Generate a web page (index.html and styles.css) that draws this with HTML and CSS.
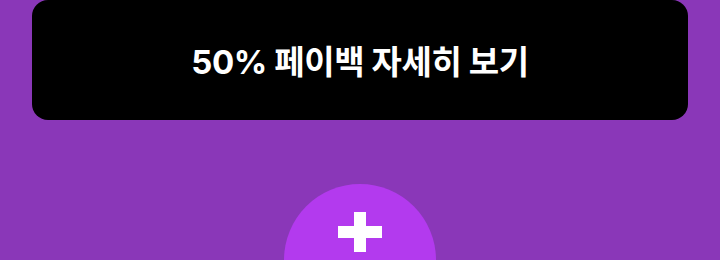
FILE: index.html
```html
<!DOCTYPE html>
<html lang="ko">
  <head>
    <meta charset="UTF-8" />
    <meta name="viewport" content="width=device-width, initial-scale=1.0" />
    <title>페이백</title>
    <link rel="stylesheet" href="styles.css">
  </head>
  <body>
    <button class="payback-btn">50% 페이백 자세히 보기</button>

    <div class="add-wrap">
      <button class="add-btn" aria-label="추가">
        <span class="plus"></span>
      </button>
    </div>
  </body>
</html>
```

FILE: styles.css
```css
* {
  margin: 0;
  padding: 0;
  box-sizing: border-box;
}

body {
  height: 260px;
  background-color: #8a37b8;
  font-family: Inter, "Noto Sans CJK KR", sans-serif;
  padding: 0 32px;
  overflow: hidden;
}

button {
  border: none;
  cursor: pointer;
  font-family: inherit;
}

.payback-btn {
  display: block;
  width: 100%;
  height: 120px;
  background-color: #000;
  color: #fff;
  border-radius: 16px;
  font-size: 33px;
  font-weight: 700;
  letter-spacing: -0.4px;
}

.add-wrap {
  display: flex;
  justify-content: center;
  margin-top: 64px;
}

.add-btn {
  width: 152px;
  height: 152px;
  border-radius: 50%;
  background-color: #b33aee;
  display: flex;
  justify-content: center;
  padding-top: 28px;
}

.plus {
  position: relative;
  width: 44px;
  height: 40px;
}

.plus::before,
.plus::after {
  content: "";
  position: absolute;
  background-color: #fff;
}

.plus::before {
  left: 0;
  right: 0;
  top: 14px;
  height: 12px;
}

.plus::after {
  top: 0;
  bottom: 0;
  left: 16px;
  width: 12px;
}
```
